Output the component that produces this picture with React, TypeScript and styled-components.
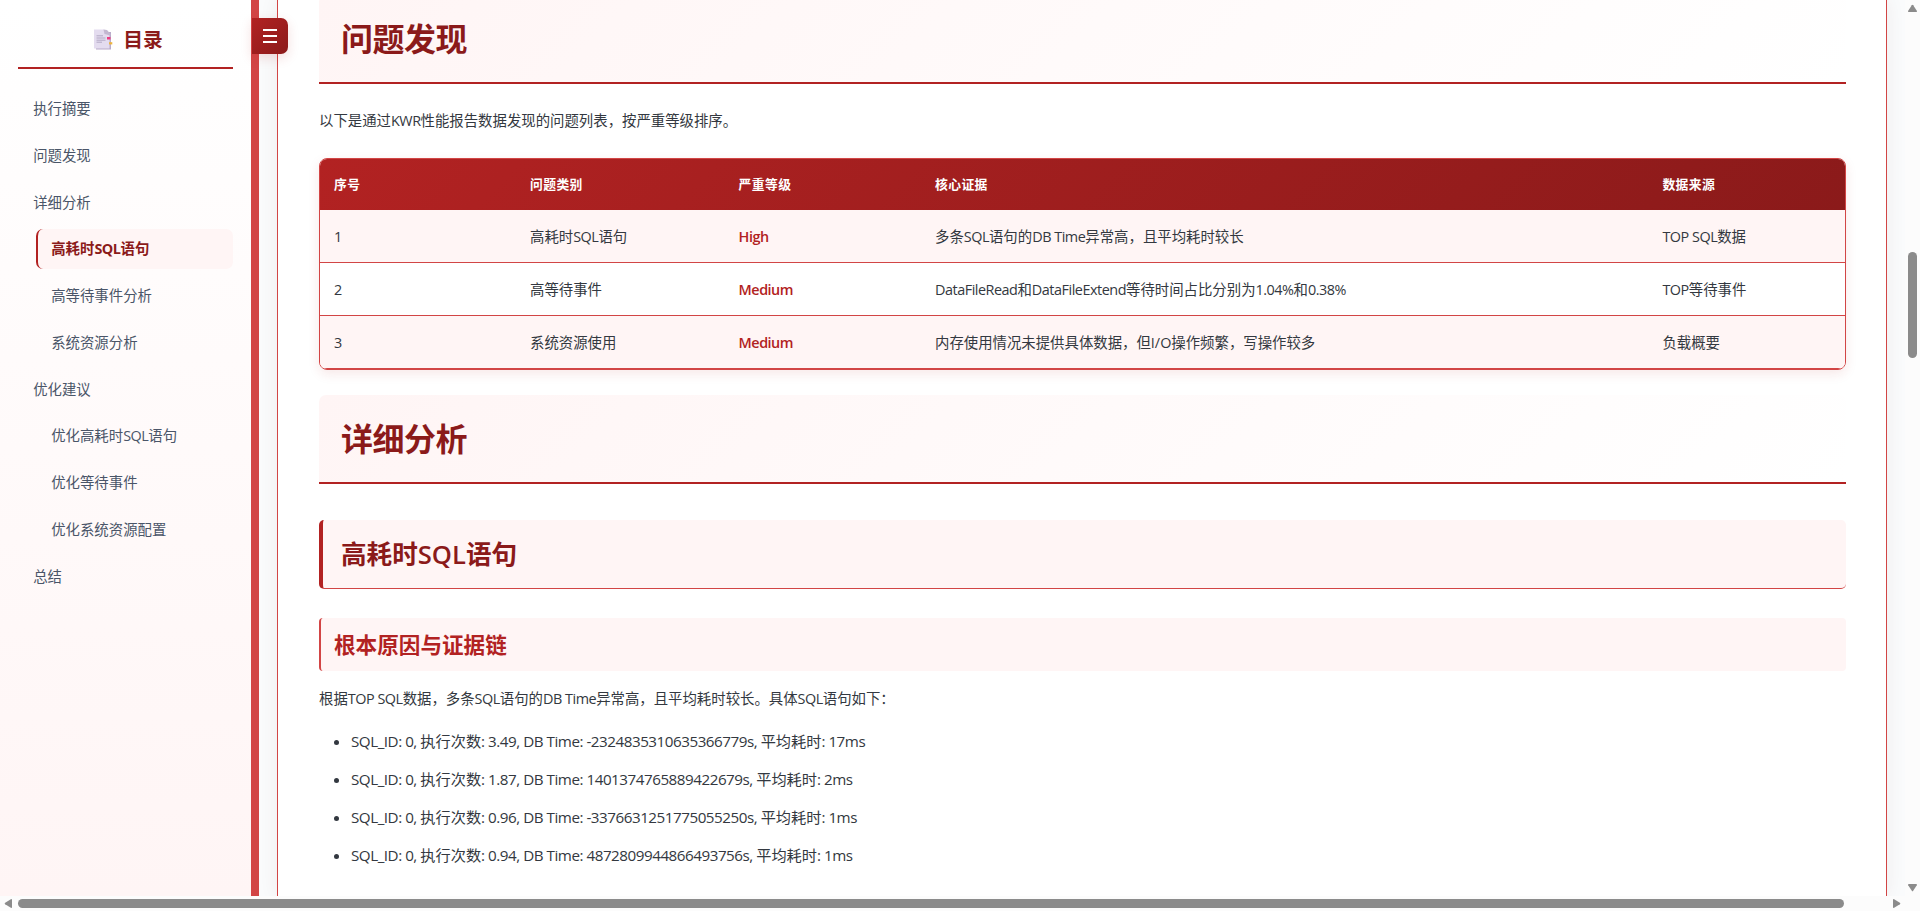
import React from "react";
import styled, { createGlobalStyle } from "styled-components";

const GlobalStyle = createGlobalStyle`
  * { box-sizing: border-box; }
  html, body { margin: 0; padding: 0; }
  body {
    height: 911px;
    overflow: hidden;
    background: #fafbfc;
    color: #333840;
    font-family: "Open Sans", "Noto Sans CJK SC", sans-serif;
    line-height: 1.5;
  }
`;

const Window = styled.div`
  display: grid;
  grid-template-columns: 1905px 15px;
  grid-template-rows: 896px 15px;
  width: 1920px;
  height: 911px;
  overflow: hidden;
`;

const Viewport = styled.div`
  display: flex;
  position: relative;
  overflow: hidden;
`;

const Sidebar = styled.aside`
  flex: none;
  width: 259px;
  border-right: 8px solid #d24545;
  padding: 18px;
  background: linear-gradient(180deg, #ffffff 0%, #fff5f5 100%);
`;

const SidebarTitle = styled.div`
  display: flex;
  align-items: center;
  justify-content: center;
  gap: 10px;
  height: 51px;
  padding: 0 0 6px 6px;
  margin-bottom: 20px;
  border-bottom: 2px solid #b22222;
  color: #8b1a1a;
  font-size: 19.8px;
  font-weight: 700;
`;

const NavItem = styled.a<{ $sub?: boolean; $active?: boolean }>`
  display: flex;
  align-items: center;
  height: 40px;
  margin-bottom: 6.75px;
  margin-left: ${(p) => (p.$sub ? "18px" : "0")};
  padding-left: 13.2px;
  border-left: 2px solid ${(p) => (p.$active ? "#b22222" : "transparent")};
  border-radius: 7px;
  background: ${(p) => (p.$active ? "#fff5f5" : "transparent")};
  color: ${(p) => (p.$active ? "#8b1a1a" : "#4a5568")};
  font-size: 14.4px;
  font-weight: ${(p) => (p.$active ? 700 : 400)};
  white-space: nowrap;
`;

const Latin = styled.span`
  letter-spacing: -0.47px;
`;

const ToggleButton = styled.button`
  position: absolute;
  left: 252px;
  top: 18px;
  display: flex;
  align-items: center;
  justify-content: center;
  width: 36px;
  height: 36px;
  padding: 0;
  border: 0;
  border-radius: 0 7px 7px 0;
  background: linear-gradient(135deg, #b22222, #8b1a1a);
  box-shadow: 0 4px 12px rgba(178, 34, 34, 0.15);
`;

const Page = styled.main`
  flex: none;
  width: 1610px;
  margin-left: 18px;
  padding: 0 40px 0 41px;
  border: solid #d24545;
  border-width: 0 1px;
  background: #fff;
  box-shadow: 0 0 18px rgba(90, 40, 40, 0.07);
`;

const SectionTitle = styled.h1<{ $clipped?: boolean }>`
  display: flex;
  align-items: center;
  height: 89px;
  margin: ${(p) => (p.$clipped ? "-5px 0 0" : "25px 0 0")};
  padding: 1px 0 0 22px;
  border-bottom: 2px solid #b22222;
  border-radius: 7px 7px 0 0;
  background: linear-gradient(135deg, #fff5f5 0%, #ffffff 100%);
  color: #8b1a1a;
  font-size: 32px;
  letter-spacing: -0.5px;
  font-weight: 700;
`;

const SubTitle = styled.h2`
  display: flex;
  align-items: center;
  height: 69px;
  margin: 36px 0 0;
  padding: 2px 0 0 18px;
  border-left: 4px solid #b22222;
  border-bottom: 1px solid #d24545;
  border-radius: 5px;
  background: #fff5f5;
  color: #8b1a1a;
  font-size: 25.6px;
  font-weight: 700;
`;

const SubTitleLatin = styled.span`
  font-weight: 600;
`;

const MinorTitle = styled.h3`
  display: flex;
  align-items: center;
  height: 53px;
  margin: 29px 0 0;
  padding: 2px 0 0 13px;
  border-left: 2px solid #d24545;
  border-radius: 4px;
  background: #fff5f5;
  color: #b22222;
  font-size: 21.6px;
  font-weight: 700;
`;

const Paragraph = styled.p<{ $top: number; $bottom: number }>`
  margin: ${(p) => p.$top}px 0 ${(p) => p.$bottom}px;
  font-size: 14.4px;
  line-height: 26px;
`;

const Table = styled.div`
  height: 212px;
  border: 1px solid #d24545;
  border-radius: 8px;
  overflow: hidden;
  box-shadow: 0 4px 12px rgba(178, 34, 34, 0.1);
`;

const Row = styled.div<{ $head?: boolean; $tint?: boolean }>`
  display: grid;
  grid-template-columns: 196px 208.6px 196.4px 727.4px 1fr;
  align-items: center;
  height: ${(p) => (p.$head ? 51 : 53)}px;
  padding-top: ${(p) => (p.$head ? 0 : 2)}px;
  border-bottom: ${(p) => (p.$head ? "0" : "1px solid #d24545")};
  background: ${(p) =>
    p.$head ? "linear-gradient(135deg, #b22222, #8b1a1a)" : p.$tint ? "#fff5f5" : "#fff"};
  color: ${(p) => (p.$head ? "#fff" : "inherit")};
  font-size: ${(p) => (p.$head ? "12.8px" : "14.4px")};
  font-weight: ${(p) => (p.$head ? 700 : 400)};
  letter-spacing: ${(p) => (p.$head ? "0.4px" : "0")};
`;

const Cell = styled.div`
  padding-left: 14px;
  white-space: nowrap;
`;

const Severity = styled.span`
  color: #b22222;
  font-weight: 600;
  letter-spacing: -0.5px;
`;

const List = styled.ul`
  margin: 0;
  padding: 0 0 0 32px;
`;

const ListItem = styled.li`
  height: 38px;
  line-height: 38px;
  font-size: 15.2px;
  white-space: nowrap;
`;

const VerticalBar = styled.div`
  display: flex;
  flex-direction: column;
  align-items: center;
  padding: 4px 0 4px;
  background: #fcfcfc;
`;

const VerticalThumb = styled.div`
  width: 9px;
  height: 106px;
  margin: 239px 0 auto;
  border-radius: 5px;
  background: #8b8b8b;
`;

const HorizontalBar = styled.div`
  grid-column: 1 / 3;
  display: flex;
  align-items: center;
  padding: 0 19px 0 4px;
  background: #fcfcfc;
`;

const HorizontalThumb = styled.div`
  width: 1826px;
  height: 9px;
  margin: 0 auto 0 5px;
  border-radius: 5px;
  background: #8b8b8b;
`;

const ArrowSvg = styled.svg`
  display: block;
  flex: none;
`;

const Arrow = ({ turn }: { turn: number }) => (
  <ArrowSvg width="9" height="9" viewBox="0 0 9 9">
    <path
      d="M3.8 1.2Q4.5 .2 5.2 1.2L8.8 6.8Q9.2 8 8.2 8H.8Q-.2 8 .2 6.8Z"
      fill="#8b8b8b"
      transform={`rotate(${turn} 4.5 4.5)`}
    />
  </ArrowSvg>
);

const BookmarkIcon = () => (
  <svg width="19" height="21" viewBox="0 0 19 21">
    <path d="M2 3H17V20.5H2Z" fill="#b9abc9" />
    <path d="M0 .5H10L15.5 6V19.5H0Z" fill="#e4dcef" />
    <path d="M9.5 .5L13 1L16.5 5V6.5L10.5 5Z" fill="#c3b7d0" />
    <path d="M2.5 6.8H9M2.5 9H11.5M2.5 11.2H11.5M2.5 13.2H8" stroke="#b3a8c4" strokeWidth="1" />
    <path d="M13 8H16.5V10.5H13Z" fill="#ee3b80" />
    <path d="M15 13.2H18.3V15.4H15Z" fill="#eeb43c" />
  </svg>
);

type NavEntry = { text: React.ReactNode; sub?: boolean; active?: boolean };

const nav: NavEntry[] = [
  { text: "执行摘要" },
  { text: "问题发现" },
  { text: "详细分析" },
  { text: <span>高耗时<Latin>SQL</Latin>语句</span>, sub: true, active: true },
  { text: "高等待事件分析", sub: true },
  { text: "系统资源分析", sub: true },
  { text: "优化建议" },
  { text: <span>优化高耗时<Latin>SQL</Latin>语句</span>, sub: true },
  { text: "优化等待事件", sub: true },
  { text: "优化系统资源配置", sub: true },
  { text: "总结" },
];

const issues = [
  {
    kind: <>高耗时<Latin>SQL</Latin>语句</>,
    level: "High",
    proof: <>多条<Latin>SQL</Latin>语句的<Latin>DB Time</Latin>异常高，且平均耗时较长</>,
    source: <><Latin>TOP SQL</Latin>数据</>,
  },
  {
    kind: <>高等待事件</>,
    level: "Medium",
    proof: (
      <>
        <Latin>DataFileRead</Latin>和<Latin>DataFileExtend</Latin>等待时间占比分别为<Latin>1.04%</Latin>和
        <Latin>0.38%</Latin>
      </>
    ),
    source: <><Latin>TOP</Latin>等待事件</>,
  },
  {
    kind: <>系统资源使用</>,
    level: "Medium",
    proof: <>内存使用情况未提供具体数据，但I/O操作频繁，写操作较多</>,
    source: <>负载概要</>,
  },
];

const statements = [
  { count: "3.49", time: "-2324835310635366779s", average: "17ms" },
  { count: "1.87", time: "1401374765889422679s", average: "2ms" },
  { count: "0.96", time: "-3376631251775055250s", average: "1ms" },
  { count: "0.94", time: "4872809944866493756s", average: "1ms" },
];

export default function App() {
  return (
    <>
      <GlobalStyle />
      <Window>
        <Viewport>
          <Sidebar>
            <SidebarTitle>
              <BookmarkIcon />
              目录
            </SidebarTitle>
            {nav.map((entry, i) => (
              <NavItem key={i} $sub={entry.sub} $active={entry.active}>
                {entry.text}
              </NavItem>
            ))}
          </Sidebar>
          <Page>
            <SectionTitle $clipped>问题发现</SectionTitle>
            <Paragraph $top={24} $bottom={24}>
              以下是通过<Latin>KWR</Latin>性能报告数据发现的问题列表，按严重等级排序。
            </Paragraph>
            <Table>
              <Row $head>
                {["序号", "问题类别", "严重等级", "核心证据", "数据来源"].map((label) => (
                  <Cell key={label}>{label}</Cell>
                ))}
              </Row>
              {issues.map((issue, i) => (
                <Row key={i} $tint={i % 2 === 0}>
                  <Cell>{i + 1}</Cell>
                  <Cell>{issue.kind}</Cell>
                  <Cell>
                    <Severity>{issue.level}</Severity>
                  </Cell>
                  <Cell>{issue.proof}</Cell>
                  <Cell>{issue.source}</Cell>
                </Row>
              ))}
            </Table>
            <SectionTitle>详细分析</SectionTitle>
            <SubTitle>高耗时<SubTitleLatin>SQL</SubTitleLatin>语句</SubTitle>
            <MinorTitle>根本原因与证据链</MinorTitle>
            <Paragraph $top={15} $bottom={10}>
              根据<Latin>TOP SQL</Latin>数据，多条<Latin>SQL</Latin>语句的<Latin>DB Time</Latin>
              异常高，且平均耗时较长。具体<Latin>SQL</Latin>语句如下：
            </Paragraph>
            <List>
              {statements.map((s) => (
                <ListItem key={s.time}>
                  <Latin>SQL_ID: 0, </Latin>执行次数<Latin>: {s.count}, DB Time: {s.time}, </Latin>
                  平均耗时<Latin>: {s.average}</Latin>
                </ListItem>
              ))}
            </List>
          </Page>
          <ToggleButton aria-label="menu">
            <svg width="14" height="14" viewBox="0 0 14 14">
              <path d="M0 1H14M0 7H14M0 13H14" stroke="#fff" strokeWidth="2" />
            </svg>
          </ToggleButton>
        </Viewport>
        <VerticalBar>
          <Arrow turn={0} />
          <VerticalThumb />
          <Arrow turn={180} />
        </VerticalBar>
        <HorizontalBar>
          <Arrow turn={-90} />
          <HorizontalThumb />
          <Arrow turn={90} />
        </HorizontalBar>
      </Window>
    </>
  );
}
